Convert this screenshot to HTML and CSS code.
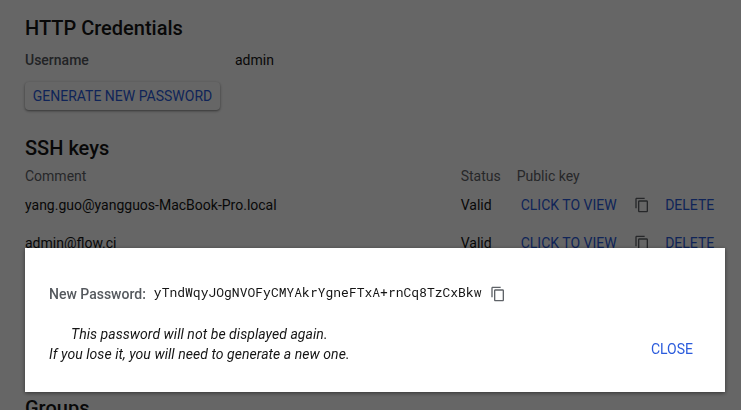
FILE: index.html
```html
<!DOCTYPE html>
<html lang="en">
<head>
<meta charset="utf-8">
<title>HTTP Credentials</title>
<link rel="stylesheet" href="styles.css">
</head>
<body>
<svg class="symbols" aria-hidden="true">
  <symbol id="copy" viewBox="0 0 24 24"><path d="M16 1H4c-1.1 0-2 .9-2 2v14h2V3h12V1zm3 4H8c-1.1 0-2 .9-2 2v14c0 1.1.9 2 2 2h11c1.1 0 2-.9 2-2V7c0-1.1-.9-2-2-2zm0 16H8V7h11v14z"/></symbol>
</svg>
<main class="page">
  <section class="credentials">
    <h2>HTTP Credentials</h2>
    <div class="field"><span class="label">Username</span><span>admin</span></div>
    <button class="raised">GENERATE NEW PASSWORD</button>
  </section>
  <section class="keys">
    <h2>SSH keys</h2>
    <div class="row head"><span>Comment</span><span>Status</span><span>Public key</span></div>
    <div class="row">
      <span>yang.guo@yangguos-MacBook-Pro.local</span><span>Valid</span>
      <button class="link view">CLICK TO VIEW</button>
      <svg class="icon"><use href="#copy"/></svg>
      <button class="link">DELETE</button>
    </div>
    <div class="row">
      <span>admin@flow.ci</span><span>Valid</span>
      <button class="link view">CLICK TO VIEW</button>
      <svg class="icon"><use href="#copy"/></svg>
      <button class="link">DELETE</button>
    </div>
  </section>
  <section class="groups"><h2>Groups</h2></section>
</main>
<div class="backdrop"></div>
<div class="dialog" role="dialog">
  <div class="password">
    <span class="label">New Password:</span>
    <span class="value">yTndWqyJOgNVOFyCMYAkrYgneFTxA+rnCq8TzCxBkw</span>
    <svg class="icon"><use href="#copy"/></svg>
  </div>
  <div class="footer">
    <p class="warning">This password will not be displayed again.<br>If you lose it, you will need to generate a new one.</p>
    <button class="link">CLOSE</button>
  </div>
</div>
</body>
</html>
```
FILE: styles.css
```css
* { box-sizing: border-box; }
body {
  margin: 0;
  height: 410px;
  overflow: hidden;
  background: #fff;
  color: #151515;
  font: 14px/20px Roboto, sans-serif;
}
h2 { margin: 0; font-size: 20px; line-height: 26px; font-weight: 500; }
button { font: inherit; border: 0; padding: 0; background: none; color: #2a5bdc; white-space: nowrap; }
.symbols { position: absolute; width: 0; height: 0; }
.page { padding: 15px 25px 0; }
.label { font-weight: 500; color: #55595e; }
.field { display: grid; grid-template-columns: 210px 1fr; margin-top: 9px; }
.raised {
  display: block;
  width: 195px;
  height: 28px;
  margin-top: 12px;
  border-radius: 4px;
  box-shadow: 0 1px 2px rgba(0, 0, 0, .35), 0 1px 3px 1px rgba(0, 0, 0, .12);
}
.keys { height: 285px; padding-top: 25px; }
.row {
  display: grid;
  grid-template-columns: 435.7px 56px 117.8px 30.7px auto;
  align-items: center;
  justify-content: start;
  height: 38px;
}
.head { height: 20px; margin: 5px 0 0; color: #5f6368; }
.head > :last-child { grid-column: span 3; }
.view { text-align: left; padding-left: 4px; }
.icon { width: 16px; height: 16px; fill: #5f6368; }
.backdrop { position: fixed; inset: 0; background: rgba(0, 0, 0, .6); }
.dialog {
  position: fixed;
  left: 25px;
  top: 248px;
  width: 700px;
  height: 144px;
  padding: 36px 32px 0 24px;
  background: #fff;
  box-shadow: 0 1px 4px rgba(0, 0, 0, .5);
}
.password { display: flex; align-items: center; height: 20px; }
.value { margin: -5px 8px 0; font: 13px/20px "Roboto Mono", "DejaVu Sans Mono", monospace; }
.password .icon { margin-top: -1px; }
.footer { display: flex; justify-content: space-between; align-items: flex-end; margin-top: 20px; }
.warning { margin: 0; text-align: center; font-style: italic; letter-spacing: .05px; }
.footer .link { margin-bottom: 5px; }
```
